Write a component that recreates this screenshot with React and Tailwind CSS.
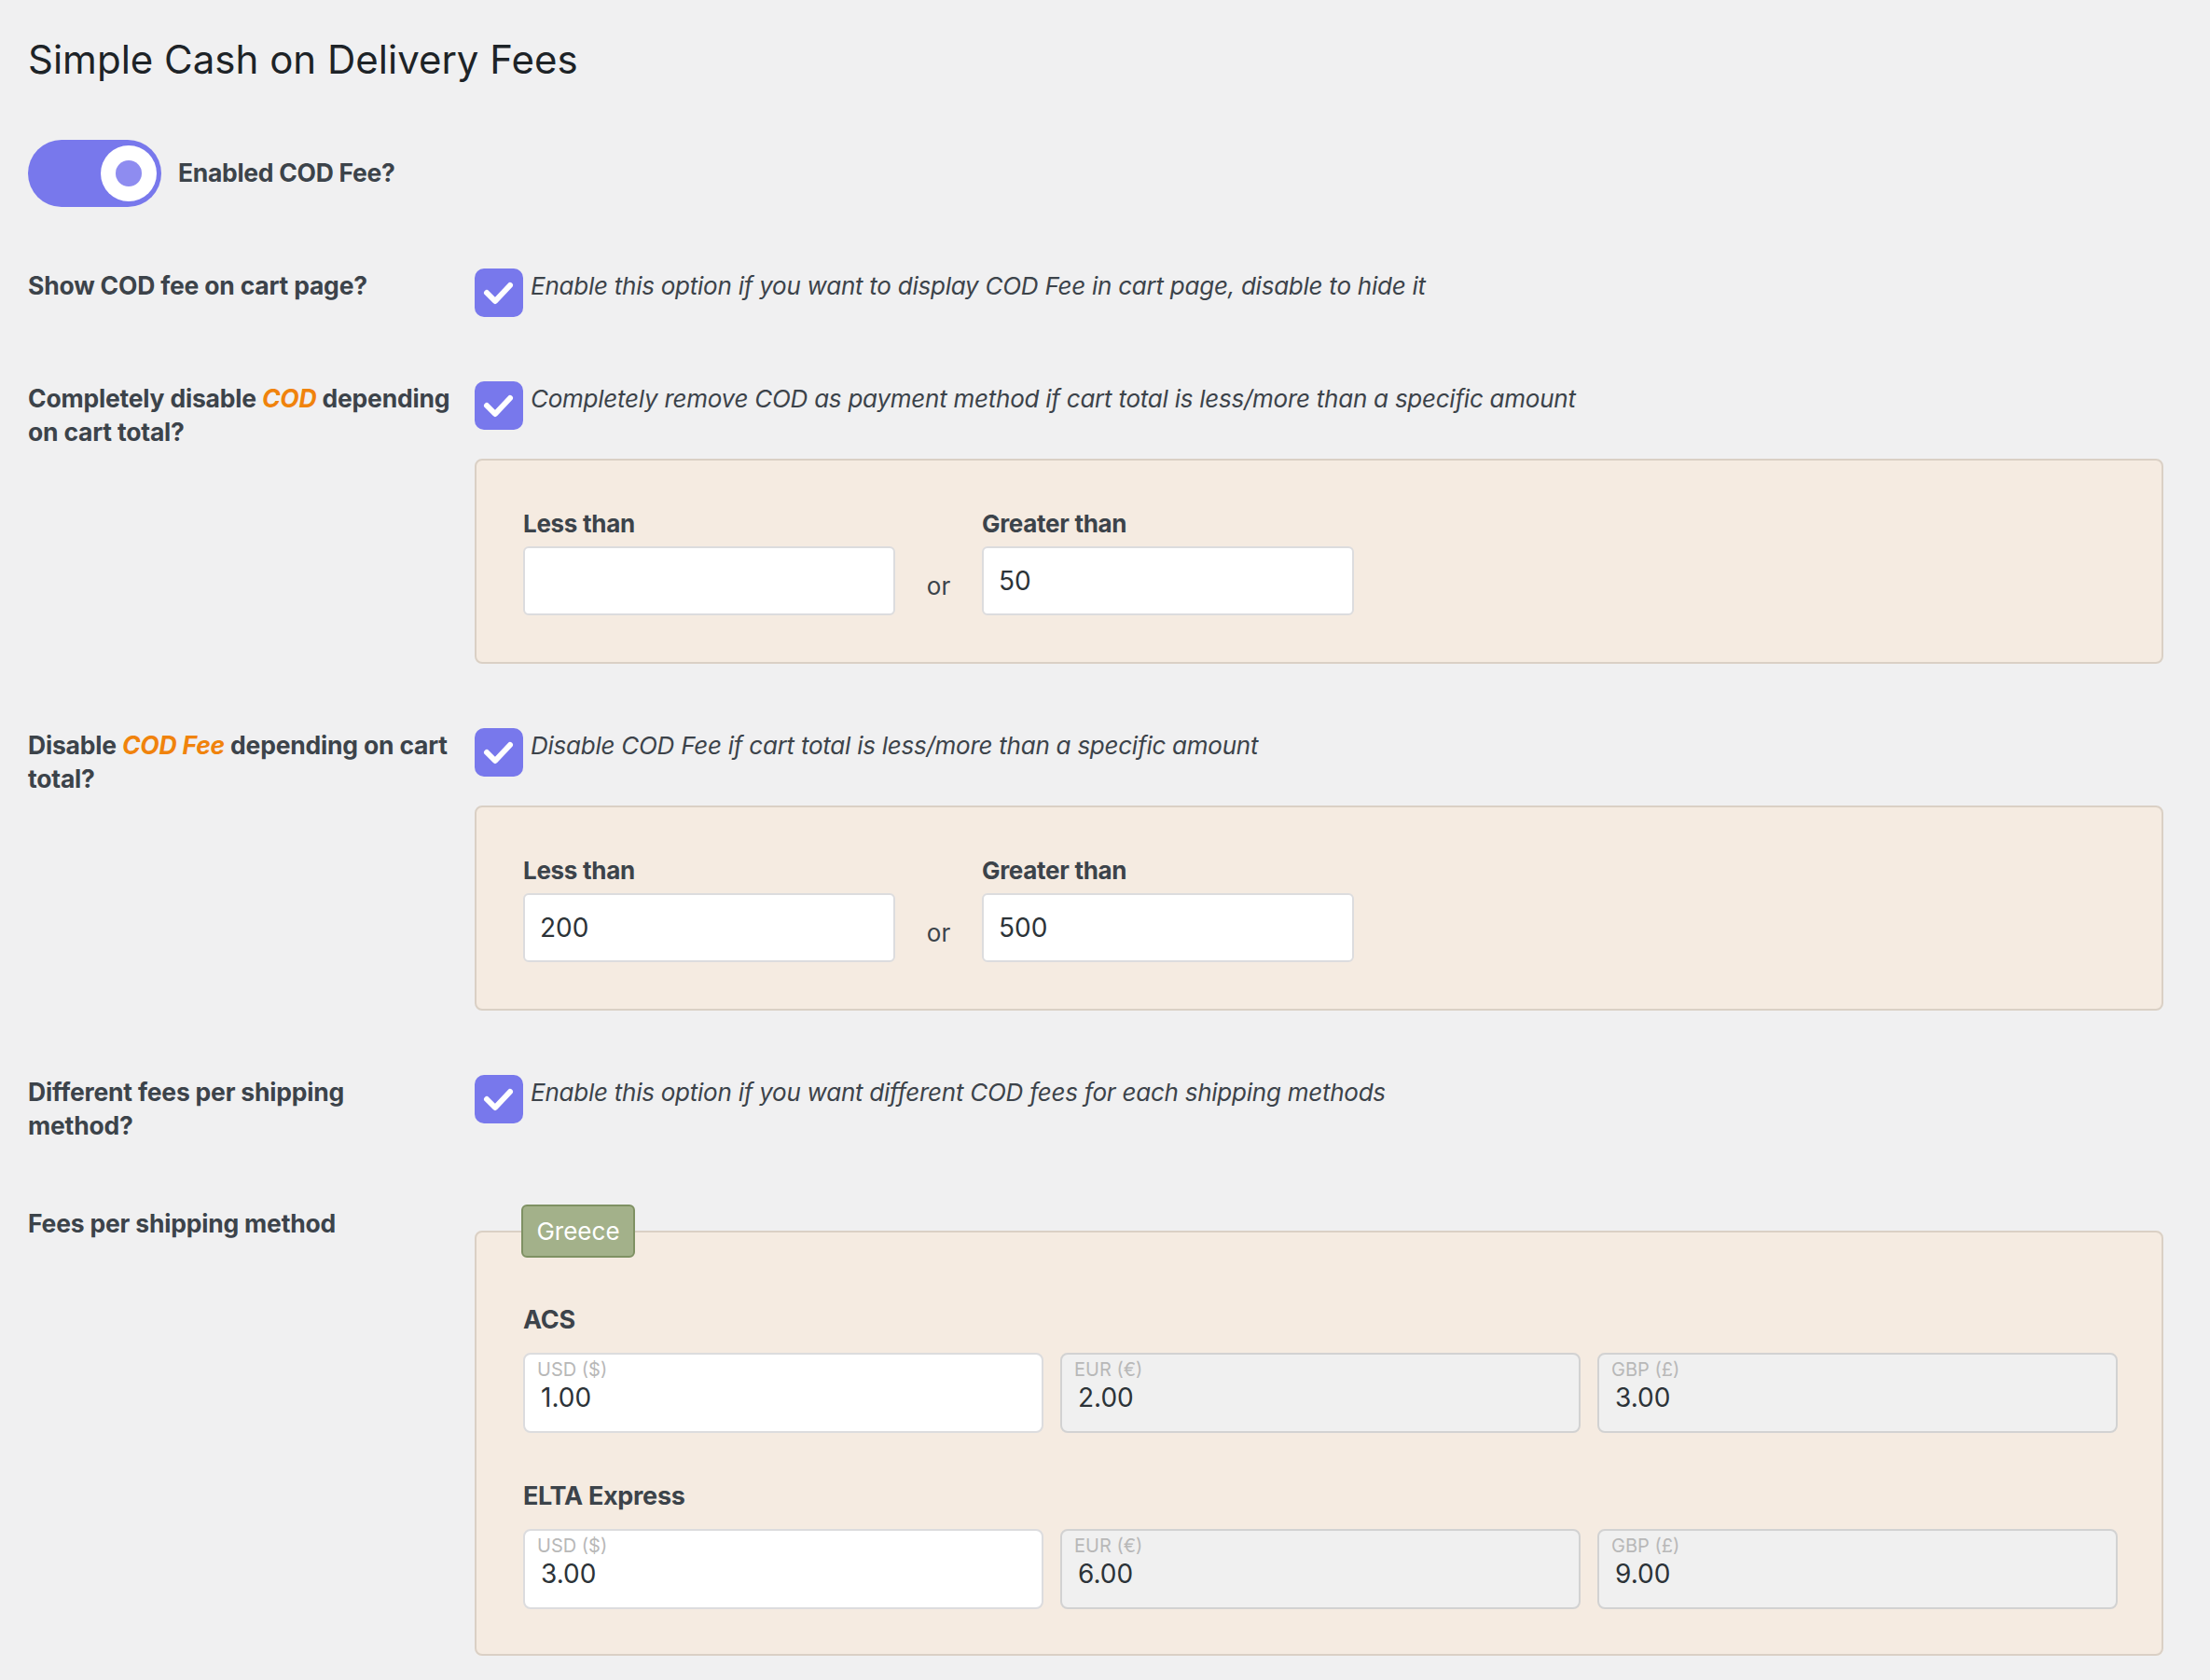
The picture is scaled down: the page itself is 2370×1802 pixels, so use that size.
import React from "react";

const Checkbox = () => (
    <div className="w-[52px] h-[52px] shrink-0 rounded-[10px] bg-[#7878ec] flex items-center justify-center">
        <svg width="52" height="52" viewBox="0 0 52 52" fill="none">
            <polyline
                points="13,26 22,35 38,18"
                stroke="#fff"
                strokeWidth="6"
                strokeLinecap="round"
                strokeLinejoin="round"
            />
        </svg>
    </div>
);

const Orange = ({ children }) => (
    <span className="text-[#f0830c] italic font-bold">{children}</span>
);

const Row = ({ label, children }) => (
    <div className="flex items-start">
        <div className="w-[479px] shrink-0 text-[26.5px] leading-[36px] font-bold tracking-[-0.2px] text-[#3c434a] whitespace-nowrap">
            {label}
        </div>
        <div className="flex-1 min-w-0">{children}</div>
    </div>
);

const Option = ({ text }) => (
    <div className="flex items-start gap-[8px]">
        <Checkbox />
        <p className="text-[26px] leading-[36px] italic tracking-[-0.25px] text-[#3c434a] pt-px">{text}</p>
    </div>
);

const AmountInput = ({ value }) => (
    <div className="w-[399px] h-[74px] border-2 border-[#dcdcde] rounded-[6px] bg-white px-[16px] flex items-center text-[28px] text-[#2c3338]">
        {value}
    </div>
);

// less than / greater than box
const RangePanel = ({ less, greater }) => (
    <div className="mt-[31px] border-2 border-[#dad0c5] rounded-[8px] bg-[#f5ebe1] pl-[50px] pr-[50px] pt-[50px] pb-[50px]">
        <div className="flex items-start">
            <div>
                <div className="text-[26px] leading-[36px] font-bold tracking-[-0.3px] text-[#3c434a] mb-[6px]">Less than</div>
                <AmountInput value={less} />
            </div>
            <div className="w-[93px] h-[74px] mt-[42px] pt-[10px] flex items-center justify-center text-[26px] text-[#3c434a]">
                or
            </div>
            <div>
                <div className="text-[26px] leading-[36px] font-bold tracking-[-0.3px] text-[#3c434a] mb-[6px]">Greater than</div>
                <AmountInput value={greater} />
            </div>
        </div>
    </div>
);

const FeeInput = ({ currency, value, disabled }) => (
    <div
        className={`h-[86px] border-2 rounded-[8px] pt-[4px] ${
            disabled ? "bg-[#f0f0f0] border-[#d2d2d2]" : "bg-white border-[#dcdcde]"
        }`}
    >
        <div className="px-[13px] text-[20px] leading-[24px] text-[#b8b8b8]">{currency}</div>
        <div className="px-[17px] text-[28px] leading-[36px] text-[#2c3338]">{value}</div>
    </div>
);

const methods = [
    { name: "ACS", fees: ["1.00", "2.00", "3.00"] },
    { name: "ELTA Express", fees: ["3.00", "6.00", "9.00"] },
];
const currencies = ["USD ($)", "EUR (€)", "GBP (£)"];

export default function App() {
    return (
        <div className="min-h-screen bg-[#f0f0f1] pl-[30px] pr-[50px] pt-[43px] pb-[30px] font-['Inter',sans-serif] text-[#3c434a]">
            <h1 className="text-[42px] leading-[42px] font-normal text-[#1d2327]">Simple Cash on Delivery Fees</h1>

            {/* Main toggle */}
            <div className="mt-[65px] flex items-center gap-[18px]">
                <div className="w-[143px] h-[72px] rounded-full bg-[#7878ec] flex items-center justify-end pr-[5px]">
                    <div className="w-[60px] h-[60px] rounded-full bg-white flex items-center justify-center">
                        <div className="w-[28px] h-[28px] rounded-full bg-[#8e8cf0]" />
                    </div>
                </div>
                <span className="text-[26.5px] font-bold tracking-[-0.3px] text-[#3c434a]">Enabled COD Fee?</span>
            </div>

            <div className="mt-[66px] flex flex-col gap-[69px]">
                <Row label="Show COD fee on cart page?">
                    <Option text="Enable this option if you want to display COD Fee in cart page, disable to hide it" />
                </Row>

                <Row
                    label={
                        <>
                            Completely disable <Orange>COD</Orange> depending
                            <br />
                            on cart total?
                        </>
                    }
                >
                    <Option text="Completely remove COD as payment method if cart total is less/more than a specific amount" />
                    <RangePanel less="" greater="50" />
                </Row>

                <Row
                    label={
                        <>
                            Disable <Orange>COD Fee</Orange> depending on cart
                            <br />
                            total?
                        </>
                    }
                >
                    <Option text="Disable COD Fee if cart total is less/more than a specific amount" />
                    <RangePanel less="200" greater="500" />
                </Row>

                <Row
                    label={
                        <>
                            Different fees per shipping
                            <br />
                            method?
                        </>
                    }
                >
                    <Option text="Enable this option if you want different COD fees for each shipping methods" />
                </Row>

                <Row label="Fees per shipping method">
                    <fieldset className="-mt-[2px] border-2 border-[#dad0c5] rounded-[8px] bg-[#f5ebe1] pl-[50px] pr-[47px] pt-[49px] pb-[48px]">
                        <legend className="-ml-[2px] h-[57px] w-[122px] flex items-center justify-center rounded-[6px] border-2 border-[#7f9163] bg-[#a3b18a] text-[26px] text-white">
                            Greece
                        </legend>
                        {methods.map((m, i) => (
                            <div key={m.name} className={i > 0 ? "mt-[50px]" : ""}>
                                <div className="text-[27px] leading-[36px] font-bold tracking-[-0.3px] text-[#3c434a] mb-[17px]">{m.name}</div>
                                <div className="grid grid-cols-3 gap-[18px]">
                                    {m.fees.map((f, j) => (
                                        <FeeInput key={j} currency={currencies[j]} value={f} disabled={j > 0} />
                                    ))}
                                </div>
                            </div>
                        ))}
                    </fieldset>
                </Row>
            </div>
        </div>
    );
}
